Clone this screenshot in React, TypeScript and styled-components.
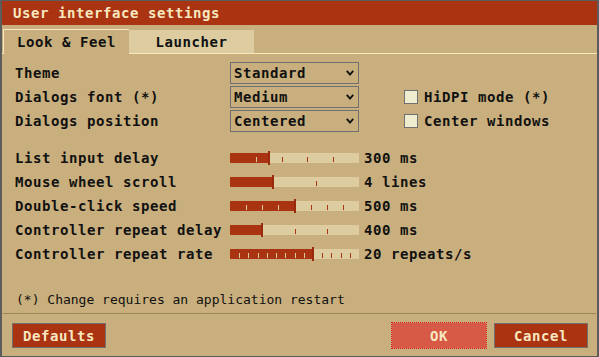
import React from "react";
import styled, { createGlobalStyle } from "styled-components";

const Global = createGlobalStyle`
  html, body { margin: 0; padding: 0; background: #5c5c5c; }
  body { font-family: "DejaVu Sans Mono", "Liberation Mono", monospace; }
`;

const RED = "#aa3311";
const TAN = "#c9af7d";
const CREAM = "#f8e8c0";

const Window = styled.div`
  box-sizing: border-box;
  width: 599px;
  height: 357px;
  border-style: solid;
  border-color: #5c5c5c;
  border-width: 1px 2px 1px 2px;
  background: ${TAN};
  display: flex;
  flex-direction: column;
  font-family: "DejaVu Sans Mono", "Liberation Mono", monospace;
  font-size: 14px;
  font-weight: bold;
  letter-spacing: 0.57px;
  color: #111;
`;

const TitleBar = styled.div`
  height: 24px;
  background: ${RED};
  color: ${CREAM};
  display: flex;
  align-items: center;
  padding-left: 11px;
`;

const TabBar = styled.div`
  box-sizing: border-box;
  height: 29px;
  display: flex;
  align-items: flex-end;
  padding-left: 1px;
  border-bottom: 1px solid ${CREAM};
`;

const Tab = styled.div<{ $active?: boolean }>`
  box-sizing: border-box;
  width: ${(p) => (p.$active ? 126 : 125)}px;
  height: ${(p) => (p.$active ? 25 : 23)}px;
  margin-bottom: ${(p) => (p.$active ? -1 : 0)}px;
  background: ${(p) => (p.$active ? TAN : "#dccca0")};
  border-top: ${(p) => (p.$active ? `1px solid ${CREAM}` : "none")};
  border-left: ${(p) => (p.$active ? `1px solid ${CREAM}` : "none")};
  display: flex;
  align-items: center;
  justify-content: center;
`;

const Content = styled.div`
  padding: 8px 0 0 13px;
  display: flex;
  flex-direction: column;
`;

const OptionsGrid = styled.div`
  display: grid;
  grid-template-columns: 215px 129px 45px auto;
  grid-auto-rows: 22px;
  row-gap: 2px;
  align-items: center;
`;

const Label = styled.div``;

const Select = styled.div`
  box-sizing: border-box;
  height: 22px;
  border: 1px solid #707070;
  display: flex;
  align-items: center;
  justify-content: space-between;
  padding: 0 4px 0 3px;
`;

const CheckRow = styled.div`
  display: flex;
  align-items: center;
  gap: 6px;
`;

const Box = styled.div`
  box-sizing: border-box;
  width: 14px;
  height: 14px;
  border: 1px solid #707070;
  background: #efedcf;
`;

const SliderGrid = styled.div`
  margin-top: 14px;
  display: grid;
  grid-template-columns: 215px 129px auto;
  grid-auto-rows: 24px;
  align-items: center;
`;

const Value = styled.div`
  padding-left: 5px;
`;

const Note = styled.div`
  margin-top: 26px;
  height: 16px;
  line-height: 16px;
  padding-left: 14px;
  font-size: 13px;
  font-weight: normal;
  letter-spacing: 0;
`;

const Separator = styled.div`
  margin: 5px 1px 0 1px;
  height: 1px;
  background: #9c8459;
`;

const Footer = styled.div`
  display: flex;
  align-items: center;
  padding: 9px 9px 0 10px;
`;

const Button = styled.div<{ $focused?: boolean }>`
  box-sizing: border-box;
  width: 94px;
  height: 25px;
  display: flex;
  align-items: center;
  justify-content: center;
  color: ${CREAM};
  background: ${(p) => (p.$focused ? "#d65a46" : RED)};
  border: 1px solid ${(p) => (p.$focused ? "#d65a46" : "#707070")};
  outline: ${(p) => (p.$focused ? "1px dotted #dd1111" : "none")};
  outline-offset: 0;
`;

const Spacer = styled.div`
  flex: 1;
`;

const ButtonGap = styled.div`
  width: 8px;
`;

const Chevron = () => (
  <svg width="8" height="6" viewBox="0 0 8 6">
    <polyline points="0.8,0.8 4,4.5 7.2,0.8" fill="none" stroke="#111" strokeWidth="1.8" />
  </svg>
);

type SliderProps = { divisions: number; value: number };

const Slider = ({ divisions, value }: SliderProps) => {
  const w = 129;
  const pos = Math.round((value / divisions) * w);
  const ticks = [];
  for (let i = 1; i < divisions; i++) {
    const x = Math.round((i / divisions) * w);
    if (x === pos) continue;
    ticks.push(
      <rect key={i} x={x} y={6} width={1} height={5} fill={x < pos ? "#dccca0" : RED} />
    );
  }
  return (
    <svg width={w} height={14} viewBox={`0 0 ${w} 14`} style={{ display: "block" }}>
      <rect x={0} y={2} width={w} height={10} fill="#dccca0" />
      <rect x={0} y={2} width={pos} height={10} fill={RED} />
      {ticks}
      <rect x={pos - 1} y={0} width={2} height={14} fill="#9a2a0c" />
    </svg>
  );
};

const sliders = [
  { label: "List input delay", divisions: 5, value: 1.5, text: "300 ms" },
  { label: "Mouse wheel scroll", divisions: 3, value: 1, text: "4 lines" },
  { label: "Double-click speed", divisions: 8, value: 4, text: "500 ms" },
  { label: "Controller repeat delay", divisions: 4, value: 1, text: "400 ms" },
  { label: "Controller repeat rate", divisions: 14, value: 9, text: "20 repeats/s" },
];

export default function App() {
  return (
    <>
      <Global />
      <Window>
        <TitleBar>User interface settings</TitleBar>
        <TabBar>
          <Tab $active>Look &amp; Feel</Tab>
          <Tab>Launcher</Tab>
        </TabBar>
        <Content>
          <OptionsGrid>
            <Label>Theme</Label>
            <Select>
              Standard <Chevron />
            </Select>
            <div />
            <div />
            <Label>Dialogs font (*)</Label>
            <Select>
              Medium <Chevron />
            </Select>
            <div />
            <CheckRow>
              <Box />
              HiDPI mode (*)
            </CheckRow>
            <Label>Dialogs position</Label>
            <Select>
              Centered <Chevron />
            </Select>
            <div />
            <CheckRow>
              <Box />
              Center windows
            </CheckRow>
          </OptionsGrid>
          <SliderGrid>
            {sliders.map((s) => (
              <React.Fragment key={s.label}>
                <Label>{s.label}</Label>
                <Slider divisions={s.divisions} value={s.value} />
                <Value>{s.text}</Value>
              </React.Fragment>
            ))}
          </SliderGrid>
        </Content>
        <Note>(*) Change requires an application restart</Note>
        <Separator />
        <Footer>
          <Button>Defaults</Button>
          <Spacer />
          <Button $focused>OK</Button>
          <ButtonGap />
          <Button>Cancel</Button>
        </Footer>
      </Window>
    </>
  );
}
